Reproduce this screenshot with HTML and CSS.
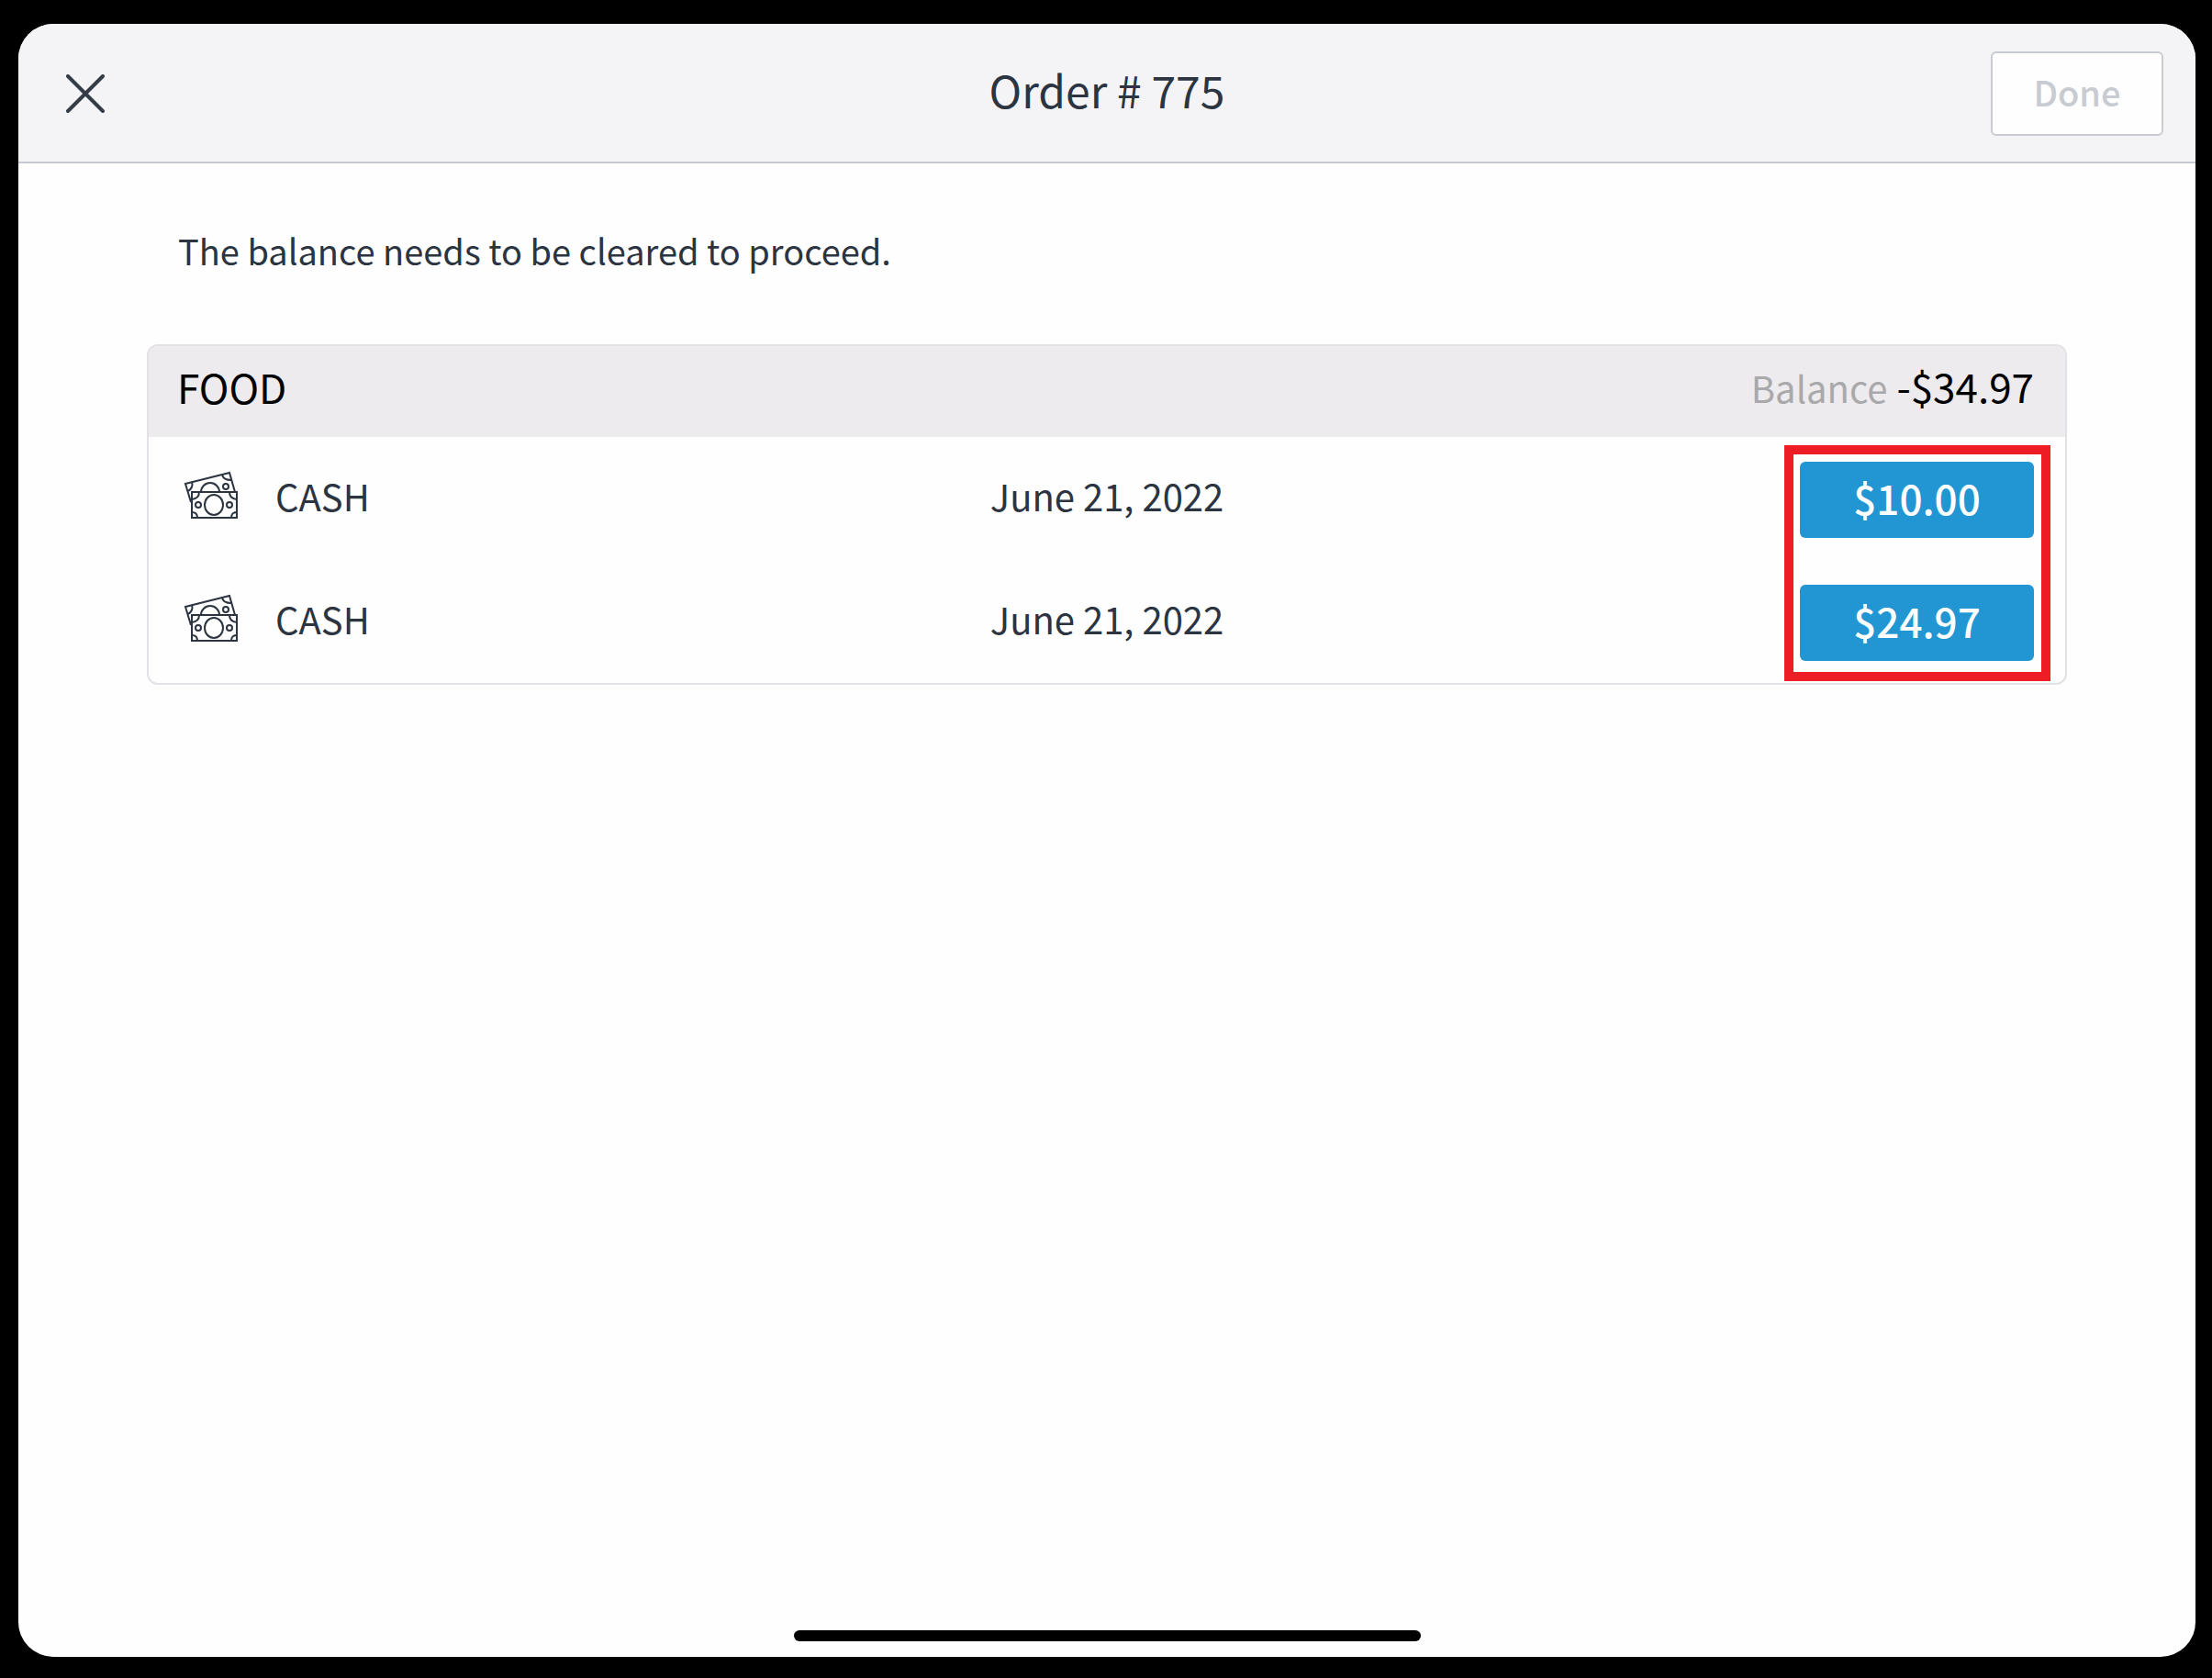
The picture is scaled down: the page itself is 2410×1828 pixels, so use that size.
FILE: index.html
```html
<!DOCTYPE html>
<html lang="en">
    <head>
        <meta charset="UTF-8" />
        <meta name="viewport" content="width=device-width, initial-scale=1.0" />
        <title>Order # 775</title>
        <link rel="stylesheet" href="styles.css">
    </head>

    <body>
        <!-- cash icon, shared by the rows -->
        <svg class="sprite" aria-hidden="true">
            <symbol id="cash" viewBox="0 0 60 54">
                <g fill="none" stroke="#2b3440" stroke-width="2">
                    <path d="M8 34 2 14 50 2 56 23" />
                    <path d="M5 22q6-4 4-10M42 4q1 6 10 6" />
                    <path d="M19 23a10 10 0 0 1 20 0" />
                    <circle cx="46" cy="17" r="3" />
                    <rect x="9" y="23" width="49" height="28" />
                    <path d="M9 31q8-1 8-8M50 23q0 7 8 8M9 45q6 0 6 6M52 51q0-6 6-6" />
                    <ellipse cx="33" cy="37" rx="10" ry="11" />
                    <circle cx="16" cy="37" r="3" />
                    <circle cx="50" cy="37" r="3" />
                </g>
            </symbol>
        </svg>

        <div class="screen">
            <header class="topbar">
                <button class="close" aria-label="Close">
                    <svg viewBox="0 0 42 42" width="42" height="42">
                        <path d="M2 2 40 40M40 2 2 40" />
                    </svg>
                </button>
                <h1>Order # 775</h1>
                <button class="done" disabled>Done</button>
            </header>

            <main class="content">
                <p class="message">The balance needs to be cleared to proceed.</p>

                <section class="panel">
                    <div class="panel-head">
                        <h2>FOOD</h2>
                        <div><span class="label">Balance</span> -$34.97</div>
                    </div>
                    <table class="payments">
                        <tr>
                            <td>
                                <div class="method">
                                    <svg width="60" height="54"><use href="#cash" /></svg>
                                    <span>CASH</span>
                                </div>
                            </td>
                            <td class="date">June 21, 2022</td>
                            <td class="amount"><button>$10.00</button></td>
                        </tr>
                        <tr>
                            <td>
                                <div class="method">
                                    <svg width="60" height="54"><use href="#cash" /></svg>
                                    <span>CASH</span>
                                </div>
                            </td>
                            <td class="date">June 21, 2022</td>
                            <td class="amount"><button>$24.97</button></td>
                        </tr>
                    </table>
                    <div class="highlight"></div>
                </section>
            </main>

            <div class="home-bar"></div>
        </div>
    </body>
</html>
```

FILE: styles.css
```css
* {
    margin: 0;
    padding: 0;
    box-sizing: border-box;
}

body {
    display: flex;
    min-height: 100vh;
    padding: 26px 18px 23px 20px;
    background: #000;
    color: #2b3440;
    font-family: 'Noto Sans CJK SC', 'Noto Sans', sans-serif;
    font-size: 40px;
    line-height: 56px;
}

button {
    padding-bottom: 4px;
    font: inherit;
}

.sprite {
    position: absolute;
    width: 0;
    height: 0;
}

.screen {
    flex: 1;
    display: flex;
    flex-direction: column;
    overflow: hidden;
    background: #fefefe;
    border-radius: 38px;
}

/* top bar */
.topbar {
    display: grid;
    grid-template-columns: 1fr auto 1fr;
    align-items: center;
    padding: 30px 35px 28px;
    background: #f4f4f7;
    border-bottom: 2px solid #c6c9d1;
}

.close {
    width: 42px;
    height: 42px;
    margin-left: 17px;
    padding: 0;
    background: none;
    border: none;
}

.close svg {
    display: block;
    fill: none;
    stroke: #343c47;
    stroke-width: 4;
    stroke-linecap: round;
}

h1 {
    padding-bottom: 10px;
    font-size: 48px;
    font-weight: 400;
}

.done {
    justify-self: end;
    width: 188px;
    height: 92px;
    background: #fefefe;
    border: 2px solid #c8cbd2;
    border-radius: 6px;
    color: #c8cbd2;
    font-size: 38px;
    font-weight: 500;
}

/* content */
.content {
    flex: 1;
    padding: 67px 140px;
}

.message {
    padding: 0 34px;
    margin-bottom: 74px;
    font-size: 38px;
}

.panel {
    position: relative;
    overflow: hidden;
    border: 2px solid #e3e1e5;
    border-radius: 12px;
}

.panel-head {
    display: flex;
    justify-content: space-between;
    align-items: center;
    height: 99px;
    padding: 0 34px 12px 31px;
    background: #edebee;
    color: #000;
    font-size: 44px;
}

.panel-head h2 {
    font-size: 44px;
    font-weight: 400;
}

.label {
    color: #a9a9ab;
    font-size: 40px;
}

.payments {
    width: 100%;
    table-layout: fixed;
    border-collapse: collapse;
}

.payments td {
    height: 134px;
    padding: 0 34px 6px;
    vertical-align: middle;
}

.method {
    display: flex;
    align-items: center;
    gap: 40px;
    padding-left: 4px;
}

.date {
    text-align: center;
}

.payments .amount {
    padding: 2px 34px 0;
    text-align: right;
}

.amount button {
    width: 255px;
    height: 83px;
    background: #2296d3;
    border: none;
    border-radius: 6px;
    color: #fff;
    font-size: 44px;
    font-weight: 500;
    vertical-align: middle;
}

/* frame around the refund buttons */
.highlight {
    position: absolute;
    top: 108px;
    right: 16px;
    bottom: 2px;
    width: 290px;
    border: 10px solid #ee1c24;
    pointer-events: none;
}

.home-bar {
    align-self: center;
    width: 683px;
    max-width: 60%;
    height: 12px;
    margin-bottom: 17px;
    background: #000;
    border-radius: 6px;
}
```
